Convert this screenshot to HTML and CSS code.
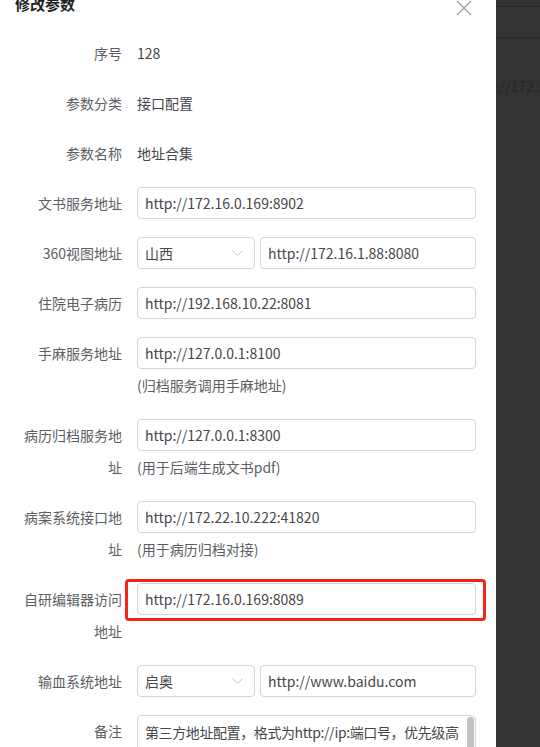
FILE: index.html
```html
<!DOCTYPE html>
<html lang="zh-CN">
<head>
    <meta charset="UTF-8">
    <meta name="viewport" content="width=device-width, initial-scale=1.0">
    <title>修改参数</title>
    <link rel="stylesheet" href="styles.css">
</head>
<body>
    <div class="screen">
        <div class="drawer">
            <div class="drawer-header">
                <span class="drawer-title">修改参数</span>
                <svg class="close" width="16" height="16" viewBox="0 0 16 16">
                    <path d="M1 1 L15 15 M15 1 L1 15" stroke="#a0a0a4" stroke-width="1.3" fill="none"/>
                </svg>
            </div>

            <div class="form">
                <div class="row">
                    <div class="label">序号</div>
                    <div class="control text">128</div>
                </div>
                <div class="row">
                    <div class="label">参数分类</div>
                    <div class="control text">接口配置</div>
                </div>
                <div class="row">
                    <div class="label">参数名称</div>
                    <div class="control text">地址合集</div>
                </div>
                <div class="row">
                    <div class="label">文书服务地址</div>
                    <div class="control">
                        <div class="input">http://172.16.0.169:8902</div>
                    </div>
                </div>
                <div class="row">
                    <div class="label">360视图地址</div>
                    <div class="control pair">
                        <div class="select">
                            <span>山西</span>
                            <svg width="11" height="6" viewBox="0 0 11 6">
                                <path d="M0.5 0.5 L5.5 5.5 L10.5 0.5" stroke="#c0c4cc" stroke-width="1" fill="none"/>
                            </svg>
                        </div>
                        <div class="input">http://172.16.1.88:8080</div>
                    </div>
                </div>
                <div class="row">
                    <div class="label">住院电子病历</div>
                    <div class="control">
                        <div class="input">http://192.168.10.22:8081</div>
                    </div>
                </div>
                <div class="row">
                    <div class="label">手麻服务地址</div>
                    <div class="control">
                        <div class="input">http://127.0.0.1:8100</div>
                        <div class="hint">(归档服务调用手麻地址)</div>
                    </div>
                </div>
                <div class="row">
                    <div class="label">病历归档服务地址</div>
                    <div class="control">
                        <div class="input">http://127.0.0.1:8300</div>
                        <div class="hint">(用于后端生成文书pdf)</div>
                    </div>
                </div>
                <div class="row">
                    <div class="label">病案系统接口地址</div>
                    <div class="control">
                        <div class="input">http://172.22.10.222:41820</div>
                        <div class="hint">(用于病历归档对接)</div>
                    </div>
                </div>
                <div class="row">
                    <div class="label">自研编辑器访问地址</div>
                    <div class="control marked">
                        <div class="input">http://172.16.0.169:8089</div>
                        <div class="mark"></div>
                    </div>
                </div>
                <div class="row">
                    <div class="label">输血系统地址</div>
                    <div class="control pair">
                        <div class="select">
                            <span>启奥</span>
                            <svg width="11" height="6" viewBox="0 0 11 6">
                                <path d="M0.5 0.5 L5.5 5.5 L10.5 0.5" stroke="#c0c4cc" stroke-width="1" fill="none"/>
                            </svg>
                        </div>
                        <div class="input">http://www.baidu.com</div>
                    </div>
                </div>
                <div class="row">
                    <div class="label">备注</div>
                    <div class="control">
                        <div class="textarea">
                            <div class="textarea-text">第三方地址配置，格式为http://ip:端口号，优先级高
于globalConfig.js配置</div>
                            <div class="thumb"></div>
                        </div>
                    </div>
                </div>
            </div>
        </div>

        <!-- page behind the modal mask -->
        <div class="backdrop">
            <div class="backdrop-bar"></div>
            <div class="backdrop-bar tall"></div>
            <div class="backdrop-text">p://172.16.0.169</div>
        </div>
    </div>
</body>
</html>
```

FILE: styles.css
```css
html, body {
    margin: 0;
    padding: 0;
    height: 100%;
    overflow: hidden;
}
body {
    font-family: "Noto Sans CJK SC", sans-serif;
    font-size: 14px;
    color: #606266;
    background-color: #333333;
}
.screen {
    display: flex;
    height: 747px;
    overflow: hidden;
}
.drawer {
    width: 496px;
    flex: none;
    background-color: #ffffff;
    overflow: hidden;
}
.drawer-header {
    display: flex;
    justify-content: space-between;
    align-items: flex-start;
    height: 28px;
    margin-top: -10px;
    padding: 0 24px 0 15px;
}
.drawer-title {
    font-size: 15px;
    font-weight: 700;
    line-height: 28px;
    color: #1f1f1f;
}
.close {
    margin-top: 10px;
}

.form {
    margin-top: 19px;
}
.row {
    display: flex;
    margin-bottom: 18px;
}
.label {
    width: 122px;
    flex: none;
    box-sizing: border-box;
    padding-left: 20px;
    text-align: right;
    line-height: 32px;
    color: #5c5e63;
}
.control {
    width: 339px;
    margin-left: 15px;
}
.control.text {
    line-height: 32px;
    color: #45474b;
}
.control.pair {
    display: flex;
    gap: 5px;
}
.control.marked {
    position: relative;
    align-self: flex-start;
}
.input {
    flex: 1;
    height: 32px;
    box-sizing: border-box;
    border: 1px solid #d3d5dc;
    border-radius: 4px;
    padding: 0 7px;
    line-height: 30px;
    color: #45474b;
    white-space: nowrap;
}
.select {
    width: 118px;
    flex: none;
    height: 32px;
    box-sizing: border-box;
    border: 1px solid #d3d5dc;
    border-radius: 4px;
    padding: 0 11px 0 7px;
    display: flex;
    align-items: center;
    justify-content: space-between;
    color: #45474b;
}
.hint {
    line-height: 32px;
    color: #5c5e63;
}
.mark {
    position: absolute;
    left: -12px;
    right: -10px;
    top: -4px;
    bottom: -6px;
    border: 3px solid #f5221b;
    border-radius: 4px;
}
.textarea {
    display: flex;
    height: 90px;
    border: 1px solid #d3d5dc;
    border-radius: 4px;
}
.textarea-text {
    flex: 1;
    padding: 5px 0 5px 7px;
    line-height: 22px;
    letter-spacing: -0.4px;
    white-space: pre;
    overflow: hidden;
    color: #45474b;
}
.thumb {
    width: 7px;
    margin: 1px 1px 0 0;
    height: 60px;
    border-radius: 3px;
    background-color: #c1c1c1;
}

.backdrop {
    flex: 1;
    background-color: #333333;
    overflow: hidden;
}
.backdrop-bar {
    height: 6px;
    border-bottom: 1px solid #262626;
}
.backdrop-bar.tall {
    height: 30px;
}
.backdrop-text {
    margin-top: 38px;
    margin-left: -9px;
    font-size: 14px;
    line-height: 20px;
    color: #262626;
    white-space: nowrap;
}
```
